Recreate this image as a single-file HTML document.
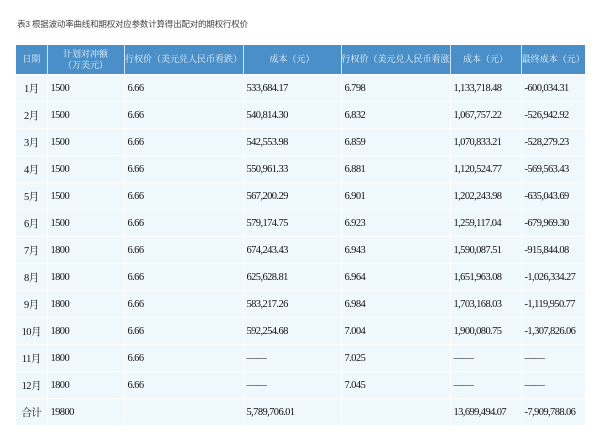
<!DOCTYPE html>
<html><head><meta charset="utf-8"><style>
body{margin:0;width:603px;height:441px;background:#fff;font-family:"Liberation Serif","Noto Serif CJK SC",serif;overflow:hidden}
.t{position:absolute;left:17px;top:18px;font-size:8.5px;color:#444;font-family:"Liberation Sans","Noto Sans CJK SC",sans-serif;letter-spacing:-0.2px;white-space:nowrap}
table{position:absolute;left:16px;top:45px;border-collapse:collapse;width:569px;table-layout:fixed}
th{background:#4a8fc8;color:#e8f2fb;font-weight:normal;font-size:9px;height:29px;line-height:11px;border-left:1px solid #cfe3f3;padding:0;white-space:nowrap;overflow:hidden;font-family:"Liberation Serif","Noto Serif CJK SC",serif}
th:first-child{border-left:none}
td{background:#eff8fd;height:26px;border-top:1px solid #fff;border-left:1px solid #fff;font-size:10.5px;letter-spacing:-0.6px;color:#111;padding:0 0 0 3px;white-space:nowrap;overflow:hidden}
td:first-child{border-left:none;text-align:center;padding:0}
</style></head><body>
<div class="t">表3 根据波动率曲线和期权对应参数计算得出配对的期权行权价</div>
<table>
<colgroup><col style="width:31px"><col style="width:77px"><col style="width:119px"><col style="width:98px"><col style="width:109px"><col style="width:71px"><col style="width:64px"></colgroup>
<tr><th>日期</th><th>计划对冲额<br>（万美元）</th><th>行权价（美元兑人民币看跌）</th><th>成本（元）</th><th>行权价（美元兑人民币看涨）</th><th>成本（元）</th><th>最终成本（元）</th></tr>
<tr><td>1月</td><td>1500</td><td>6.66</td><td>533,684.17</td><td>6.798</td><td>1,133,718.48</td><td>-600,034.31</td></tr>
<tr><td>2月</td><td>1500</td><td>6.66</td><td>540,814.30</td><td>6.832</td><td>1,067,757.22</td><td>-526,942.92</td></tr>
<tr><td>3月</td><td>1500</td><td>6.66</td><td>542,553.98</td><td>6.859</td><td>1,070,833.21</td><td>-528,279.23</td></tr>
<tr><td>4月</td><td>1500</td><td>6.66</td><td>550,961.33</td><td>6.881</td><td>1,120,524.77</td><td>-569,563.43</td></tr>
<tr><td>5月</td><td>1500</td><td>6.66</td><td>567,200.29</td><td>6.901</td><td>1,202,243.98</td><td>-635,043.69</td></tr>
<tr><td>6月</td><td>1500</td><td>6.66</td><td>579,174.75</td><td>6.923</td><td>1,259,117.04</td><td>-679,969.30</td></tr>
<tr><td>7月</td><td>1800</td><td>6.66</td><td>674,243.43</td><td>6.943</td><td>1,590,087.51</td><td>-915,844.08</td></tr>
<tr><td>8月</td><td>1800</td><td>6.66</td><td>625,628.81</td><td>6.964</td><td>1,651,963.08</td><td>-1,026,334.27</td></tr>
<tr><td>9月</td><td>1800</td><td>6.66</td><td>583,217.26</td><td>6.984</td><td>1,703,168.03</td><td>-1,119,950.77</td></tr>
<tr><td>10月</td><td>1800</td><td>6.66</td><td>592,254.68</td><td>7.004</td><td>1,900,080.75</td><td>-1,307,826.06</td></tr>
<tr><td>11月</td><td>1800</td><td>6.66</td><td>——</td><td>7.025</td><td>——</td><td>——</td></tr>
<tr><td>12月</td><td>1800</td><td>6.66</td><td>——</td><td>7.045</td><td>——</td><td>——</td></tr>
<tr><td>合计</td><td>19800</td><td></td><td>5,789,706.01</td><td></td><td>13,699,494.07</td><td>-7,909,788.06</td></tr>
</table>
</body></html>
